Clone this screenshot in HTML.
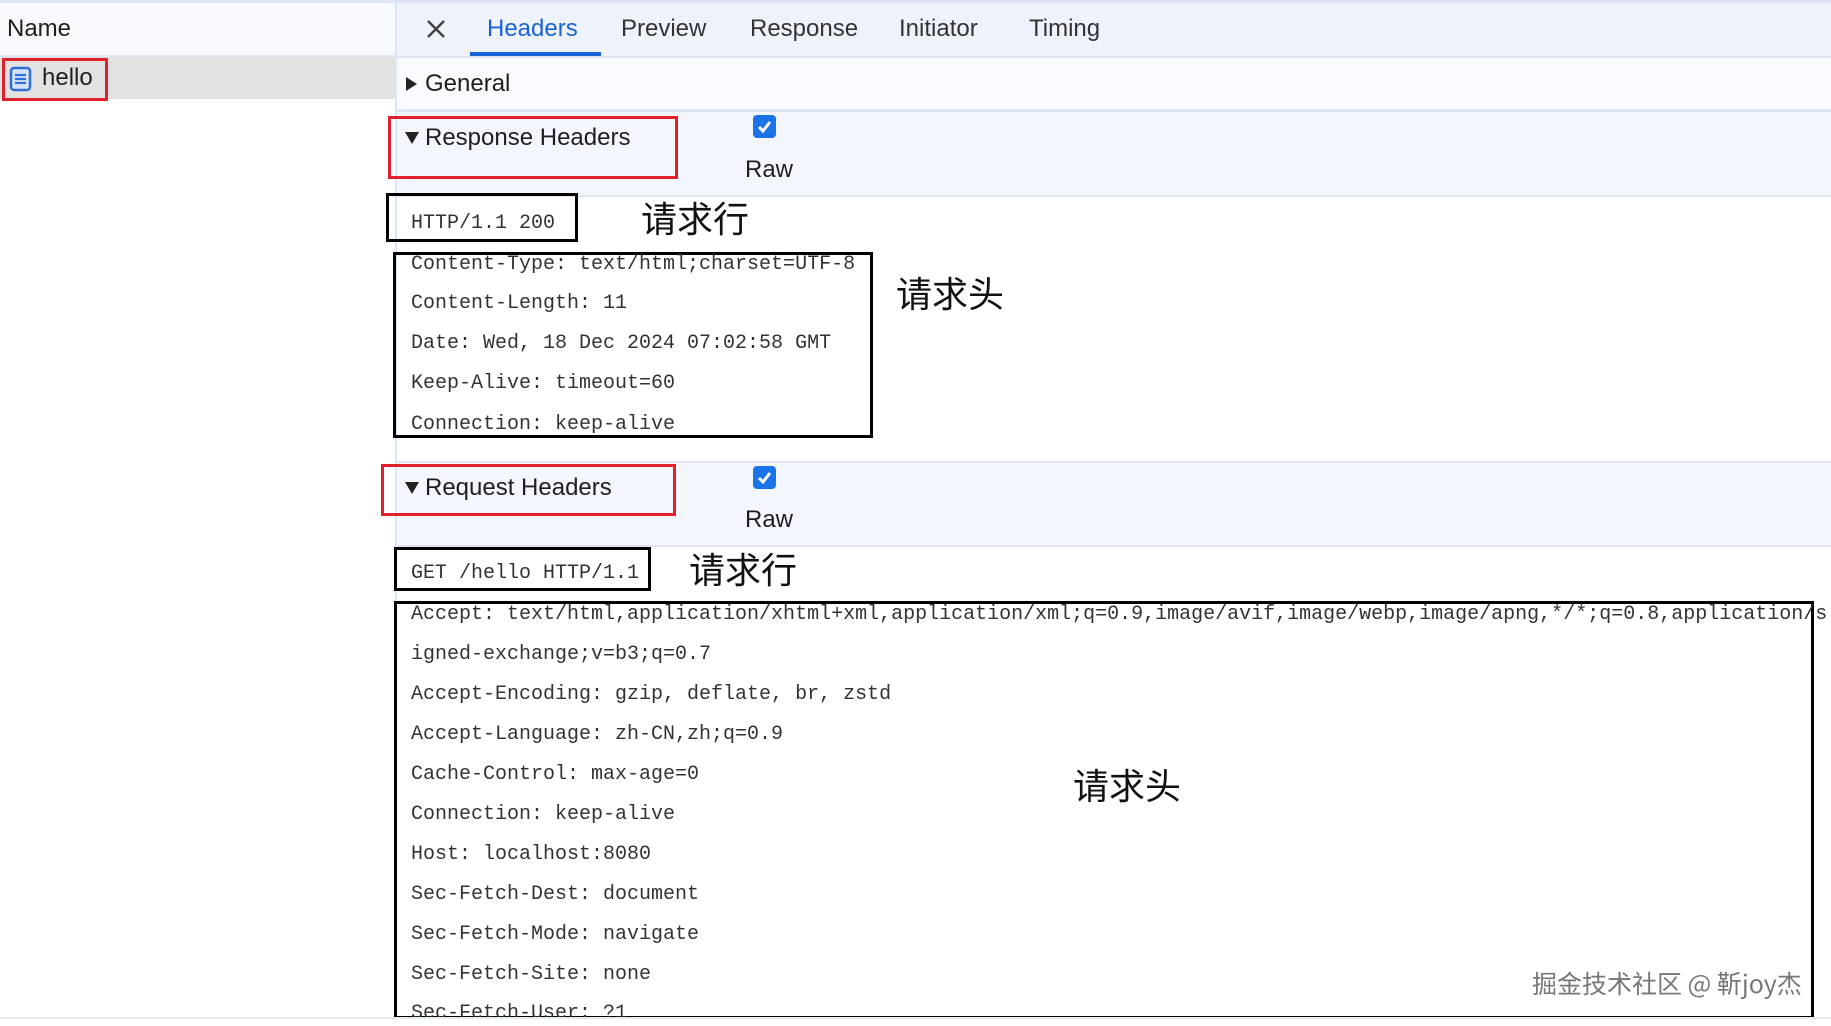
<!DOCTYPE html>
<html><head><meta charset="utf-8"><style>
*{margin:0;padding:0;box-sizing:border-box}
body{width:1831px;height:1025px;overflow:hidden;background:#fff;position:relative;font-family:"Liberation Sans","Noto Sans CJK SC",sans-serif;color:#1f1f1f}
.a{position:absolute;white-space:nowrap}
.s{font-size:24px;line-height:28px}
.m{font-family:"Liberation Mono","Noto Sans CJK SC",monospace;font-size:20px;line-height:24px;color:#333}
.cn{font-family:"Noto Sans CJK SC",sans-serif;font-size:36px;line-height:44px;color:#111}
.red{position:absolute;border:3px solid #e0202a}
.blk{position:absolute;border:3px solid #000}
.cb{position:absolute;width:23px;height:23px;background:#1a73e8;border-radius:4px}
</style></head><body>
<div class="a" style="left:0;top:0;width:1831px;height:3px;background:#dbe5f5"></div>
<div class="a" style="left:0;top:3px;width:395px;height:53px;background:#f7f9fd"></div>
<div class="a" style="left:395px;top:3px;width:1436px;height:53px;background:#eef3fb"></div>
<div class="a" style="left:0;top:55px;width:395px;height:2px;background:#dbe5f5"></div>
<div class="a" style="left:395px;top:0;width:2px;height:1025px;background:#dbe5f5"></div>
<div class="a s" style="left:7px;top:15px">Name</div>
<div class="a" style="left:0;top:57px;width:395px;height:42px;background:#e2e3e1"></div>
<svg class="a" style="left:9px;top:66px" width="24" height="26" viewBox="0 0 24 26"><rect x="2" y="2" width="19" height="22" rx="3" fill="#d6e4fb" stroke="#2f6fd8" stroke-width="2.5"/><path d="M6 9h11M6 13h11M6 17h11" stroke="#2f6fd8" stroke-width="2.2"/></svg>
<div class="a s" style="left:42px;top:64px">hello</div>
<div class="red" style="left:2px;top:58px;width:106px;height:43px"></div>
<svg class="a" style="left:425px;top:18px" width="22" height="22" viewBox="0 0 22 22"><path d="M3 3L19 19M19 3L3 19" stroke="#444" stroke-width="2.4"/></svg>
<div class="a s" style="left:487px;top:15px;color:#1a63d4">Headers</div>
<div class="a" style="left:470px;top:52px;width:131px;height:4px;background:#1a63d4"></div>
<div class="a s" style="left:621px;top:15px;color:#333">Preview</div>
<div class="a s" style="left:750px;top:15px;color:#333">Response</div>
<div class="a s" style="left:899px;top:15px;color:#333">Initiator</div>
<div class="a s" style="left:1029px;top:15px;color:#333">Timing</div>
<div class="a" style="left:397px;top:56px;width:1434px;height:2px;background:#dbe5f5"></div>
<div class="a" style="left:397px;top:58px;width:1434px;height:52px;background:#f8fafe"></div>
<div class="a" style="left:406px;top:77px;width:0;height:0;border-left:11px solid #222;border-top:7px solid transparent;border-bottom:7px solid transparent"></div>
<div class="a s" style="left:425px;top:70px">General</div>
<div class="a" style="left:397px;top:109px;width:1434px;height:3px;background:#dbe5f5"></div>
<div class="a" style="left:397px;top:112px;width:1434px;height:83px;background:#f3f6fc"></div>
<div class="a" style="left:405px;top:132px;width:0;height:0;border-top:12px solid #222;border-left:7px solid transparent;border-right:7px solid transparent"></div>
<div class="a s" style="left:425px;top:124px">Response Headers</div>
<div class="red" style="left:388px;top:116px;width:290px;height:63px"></div>
<div class="cb" style="left:753px;top:115px"></div>
<svg class="a" style="left:753px;top:115px" width="23" height="23"><path d="M6 12l4 4 7-9" stroke="#fff" stroke-width="3" fill="none"/></svg>
<div class="a s" style="left:745px;top:156px">Raw</div>
<div class="a" style="left:397px;top:195px;width:1434px;height:2px;background:#dbe5f5"></div>
<div class="blk" style="left:386px;top:193px;width:192px;height:49px"></div>
<div class="a m" style="left:411px;top:212px">HTTP/1.1 200</div>
<div class="a cn" style="left:641px;top:195px">请求行</div>
<div class="blk" style="left:393px;top:252px;width:480px;height:186px"></div>
<div class="a m" style="left:411px;top:253px">Content-Type: text/html;charset=UTF-8</div>
<div class="a m" style="left:411px;top:292px">Content-Length: 11</div>
<div class="a m" style="left:411px;top:332px">Date: Wed, 18 Dec 2024 07:02:58 GMT</div>
<div class="a m" style="left:411px;top:372px">Keep-Alive: timeout=60</div>
<div class="a m" style="left:411px;top:413px">Connection: keep-alive</div>
<div class="a cn" style="left:896px;top:270px">请求头</div>
<div class="a" style="left:397px;top:461px;width:1434px;height:2px;background:#dbe5f5"></div>
<div class="a" style="left:397px;top:463px;width:1434px;height:82px;background:#f3f6fc"></div>
<div class="a" style="left:405px;top:482px;width:0;height:0;border-top:12px solid #222;border-left:7px solid transparent;border-right:7px solid transparent"></div>
<div class="a s" style="left:425px;top:474px">Request Headers</div>
<div class="red" style="left:381px;top:464px;width:295px;height:52px"></div>
<div class="cb" style="left:753px;top:466px"></div>
<svg class="a" style="left:753px;top:466px" width="23" height="23"><path d="M6 12l4 4 7-9" stroke="#fff" stroke-width="3" fill="none"/></svg>
<div class="a s" style="left:745px;top:506px">Raw</div>
<div class="a" style="left:397px;top:545px;width:1434px;height:2px;background:#dbe5f5"></div>
<div class="blk" style="left:394px;top:547px;width:257px;height:44px"></div>
<div class="a m" style="left:411px;top:562px">GET /hello HTTP/1.1</div>
<div class="a cn" style="left:689px;top:546px">请求行</div>
<div class="blk" style="left:394px;top:601px;width:1420px;height:418px"></div>
<div class="a m" style="left:411px;top:603px">Accept: text/html,application/xhtml+xml,application/xml;q=0.9,image/avif,image/webp,image/apng,*/*;q=0.8,application/s</div>
<div class="a m" style="left:411px;top:643px">igned-exchange;v=b3;q=0.7</div>
<div class="a m" style="left:411px;top:683px">Accept-Encoding: gzip, deflate, br, zstd</div>
<div class="a m" style="left:411px;top:723px">Accept-Language: zh-CN,zh;q=0.9</div>
<div class="a m" style="left:411px;top:763px">Cache-Control: max-age=0</div>
<div class="a m" style="left:411px;top:803px">Connection: keep-alive</div>
<div class="a m" style="left:411px;top:843px">Host: localhost:8080</div>
<div class="a m" style="left:411px;top:883px">Sec-Fetch-Dest: document</div>
<div class="a m" style="left:411px;top:923px">Sec-Fetch-Mode: navigate</div>
<div class="a m" style="left:411px;top:963px">Sec-Fetch-Site: none</div>
<div class="a m" style="left:411px;top:1002px">Sec-Fetch-User: ?1</div>
<div class="a cn" style="left:1073px;top:762px">请求头</div>
<div class="a" style="left:1532px;top:967px;font-family:'Noto Sans CJK SC',sans-serif;font-size:25px;line-height:32px;color:#777">掘金技术社区 @ 靳joy杰</div>
<div class="a" style="left:0;top:1019px;width:1831px;height:6px;background:#fff"></div>
<div class="a" style="left:0;top:1017px;width:1831px;height:2px;background:#e6ecf5"></div>
</body></html>
